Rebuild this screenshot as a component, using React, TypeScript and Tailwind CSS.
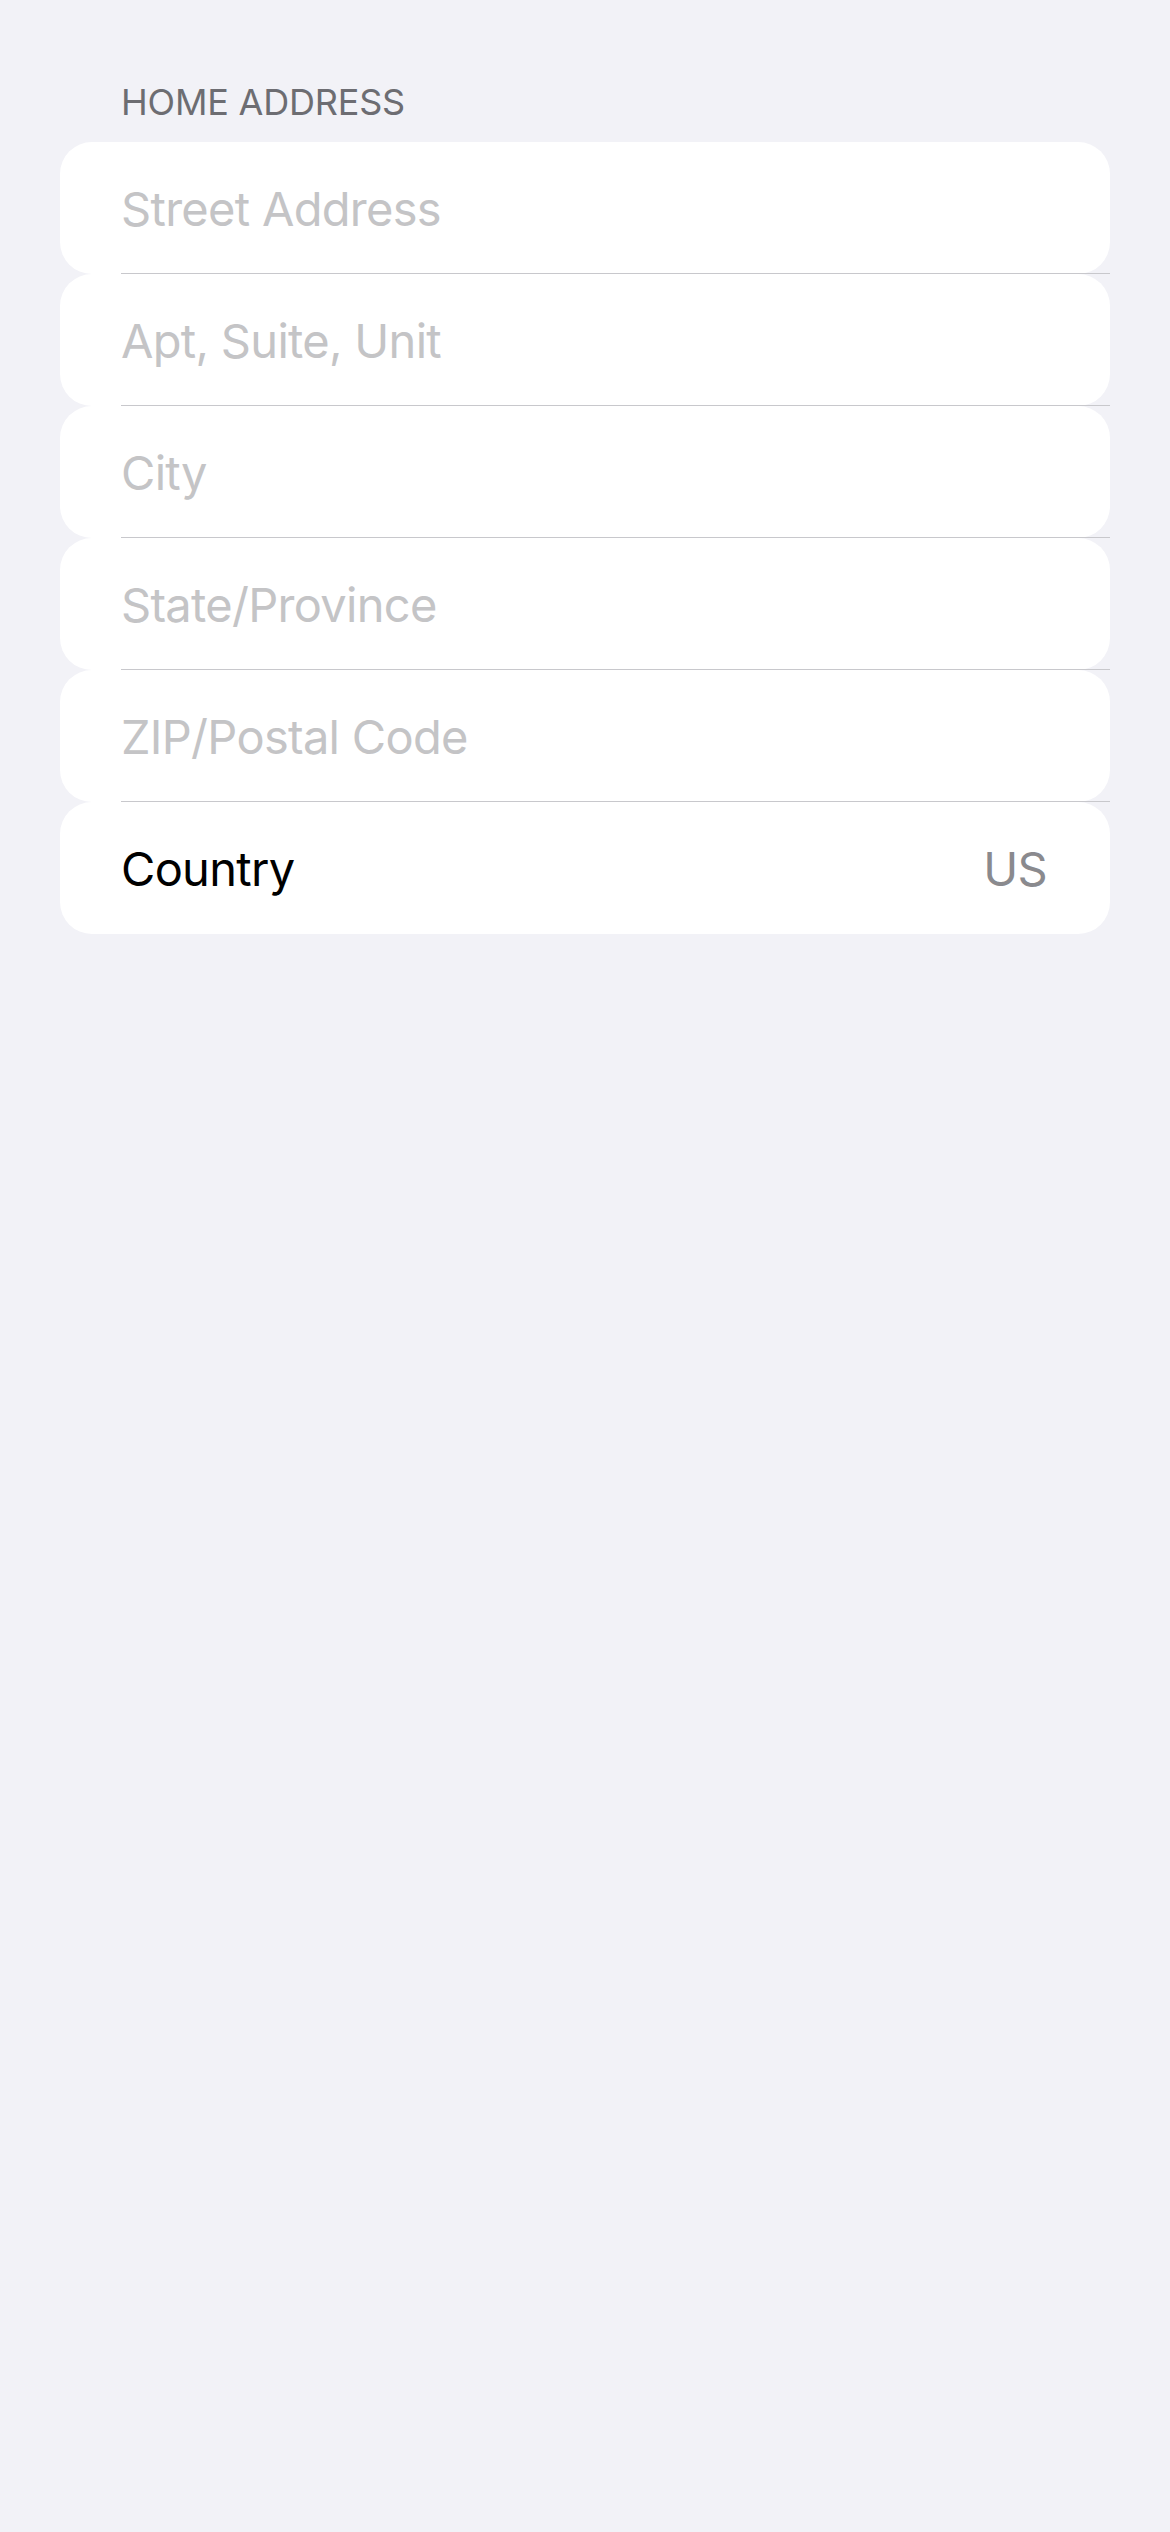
import React from "react";

const fields = [
  "Street Address",
  "Apt, Suite, Unit",
  "City",
  "State/Province",
  "ZIP/Postal Code",
];

export default function App() {
  return (
    <div
      className="min-h-[2532px] w-[1170px] bg-[#f2f2f7] pt-[79px]"
      style={{ fontFamily: "Inter, 'Noto Sans', sans-serif" }}
    >
      <div className="ml-[121px] mb-[17px] text-[36px] leading-[46px] text-[#6d6d72] tracking-[-0.2px]">
        HOME ADDRESS
      </div>
      <div className="mx-[60px] flex flex-col">
        {fields.map((f) => (
          <div
            key={f}
            className="relative flex h-[132px] items-center rounded-[32px] bg-white pl-[61px]"
          >
            <span className="text-[47px] leading-none text-[#c4c4c6] tracking-[-0.7px]">{f}</span>
            <div className="absolute bottom-0 left-[61px] right-0 h-px bg-[#c8c8cc]" />
          </div>
        ))}
        <div className="flex h-[132px] items-center justify-between rounded-[32px] bg-white pl-[61px] pr-[63px]">
          <span className="text-[47px] leading-none text-black tracking-[-0.7px]">Country</span>
          <span className="text-[47px] leading-none text-[#8a8a8e] tracking-[-0.7px]">US</span>
        </div>
      </div>
    </div>
  );
}
